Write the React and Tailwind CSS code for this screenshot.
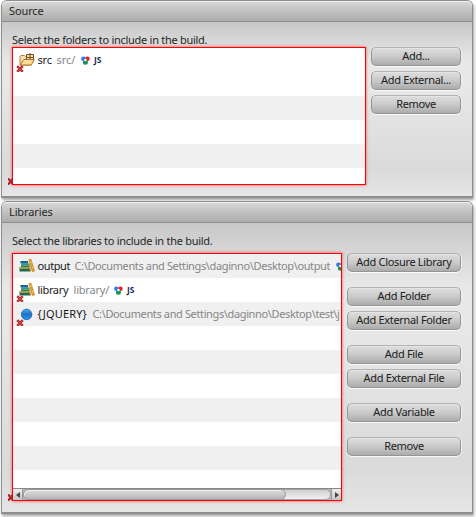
import React from 'react';

function Cross({ className }) {
  return (
    <svg className={className} width="8" height="8" viewBox="0 0 8 8">
      <path d="M1.2 1.2L6.8 6.8M6.8 1.2L1.2 6.8" stroke="#b02a30" strokeWidth="2.5" />
      <path d="M1.5 1.5L6.5 6.5M6.5 1.5L1.5 6.5" stroke="#dc5050" strokeWidth=".8" />
    </svg>
  );
}

function CornerCross() {
  return (
    <svg className="absolute -bottom-px -left-[5px]" width="5" height="7" viewBox="0 0 5 7">
      <path d="M0 .5L5 6M5 .8L0 6.5" stroke="#a5141b" strokeWidth="2.1" />
      <path d="M.5 1L5 5.5M4.5 1.5L.5 5.5" stroke="#d8413f" strokeWidth=".6" />
    </svg>
  );
}

function FolderIcon() {
  return (
    <svg width="16" height="16" viewBox="0 0 16 16">
      <path d="M1 13V4.5L2 3.5H5.5L6.5 4.5H12V13Z" fill="#f8e3ae" stroke="#b07c38" />
      <path d="M7.5 2.5H14.5V8.5H7.5ZM11 1V8M7 5.5H15" fill="#f8dfa5" stroke="#764a22" />
      <path d="M1.2 13L4.8 7.5H15.3L12.3 13Z" fill="#fbdc94" stroke="#a8702a" />
    </svg>
  );
}

function BooksIcon() {
  return (
    <svg width="16" height="16" viewBox="0 0 16 16">
      <path d="M1.5 3H9V5.5H1.5Z" fill="#17629c" />
      <path d="M2.5 5.5H10.5V9H2Z" fill="#16865a" />
      <path d="M3.5 6.7H10V7.5H3.5Z" fill="#8bd4ac" />
      <path d="M.5 9H10.5V11H.5Z" fill="#a36a35" />
      <path d="M1 9.6H9.5V10.3H1Z" fill="#ead0a0" />
      <path d="M.5 11H11V13.5H.5Z" fill="#16704f" />
      <path d="M9.8 1.8L12 1.3L15.5 12.9L13.4 13.5Z" fill="#eba51d" stroke="#b36e15" strokeWidth=".6" />
      <path d="M10.8 6L12.2 13.4H10.6Z" fill="#d28b17" />
      <path d="M11 4.4L12.4 4M12.9 9.8L14.1 9.4" stroke="#ffe18b" />
    </svg>
  );
}

function BallIcon() {
  return (
    <svg width="16" height="16" viewBox="0 0 16 16">
      <defs>
        <linearGradient id="ball" x1="0" y1="0" x2="0" y2="1">
          <stop offset="0" stopColor="#4ba6e9" />
          <stop offset=".5" stopColor="#1b74c6" />
          <stop offset="1" stopColor="#2f98ed" />
        </linearGradient>
      </defs>
      <circle cx="7.6" cy="8.4" r="5.3" fill="url(#ball)" stroke="#205c98" strokeWidth=".7" />
    </svg>
  );
}

function ClosureIcon() {
  return (
    <svg className="shrink-0" width="9" height="9" viewBox="0 0 9 9">
      <circle cx="2.4" cy="2.7" r="2.3" fill="#2f78f0" />
      <circle cx="6.4" cy="2.7" r="2.3" fill="#e5201f" />
      <circle cx="4.4" cy="6.2" r="2.5" fill="#119551" />
      <circle cx="4.4" cy="4" r="1.3" fill="#fff" />
    </svg>
  );
}

function Row({ icon, name, path, nameClass, pathClass, error, badges, shade }) {
  return (
    <div className={`relative flex h-6 shrink-0 items-center whitespace-nowrap pl-[6px] ${shade ? 'bg-[#f0f0f0]' : 'bg-white'}`}>
      {icon && (
        <>
          <span className="w-4 shrink-0">{icon}</span>
          <span className={`ml-[2.5px] shrink-0 text-[#181818] ${nameClass}`}>{name}</span>
          <span className={`shrink-0 text-[#868686] ${pathClass}`}>{path}</span>
          {badges && (
            <span className="flex shrink-0 items-center">
              <ClosureIcon />
              <b className="ml-[4px] font-['Noto_Sans'] text-[8.5px] leading-none tracking-[-0.1px] text-[#182a5c]">JS</b>
            </span>
          )}
          {error && <Cross className="absolute left-[3px] top-[17px]" />}
        </>
      )}
    </div>
  );
}

function Button({ children, className = '' }) {
  return (
    <button className={`flex h-[19px] w-full items-center justify-center whitespace-nowrap rounded-[5px] border border-[#959595] border-t-[#b2b2b2] bg-linear-to-b from-[#dedede] via-[#cacaca] to-[#acacac] tracking-[-0.32px] text-[#202020] shadow-[inset_0_1px_0_#e4e4e4,0_1px_0_#fafafa,1px_0_0_#f0f0f0] ${className}`}>
      <span className="-mt-px">{children}</span>
    </button>
  );
}

function Panel({ title, className, children }) {
  return (
    <section className={`ml-px w-[472px] rounded-t-[6px] border border-b-2 border-[#8e8e8e] bg-[#e4e4e4] shadow-[1px_2px_3px_#a0a0a0] ${className}`}>
      <header className="flex h-[21px] items-center rounded-t-[5px] border-b border-[#8e8e8e] bg-linear-to-b from-[#d8d8d8] to-[#acacac] pl-[7px] shadow-[inset_0_1px_0_#f0f0f0]">
        <span className="tracking-[-0.12px]">{title}</span>
      </header>
      {children}
    </section>
  );
}

const listClass = 'relative border border-[#f00] bg-white shadow-[0_0_3px_#ff5050]';

export default function App() {
  return (
    <main className="h-[517px] w-[476px] overflow-hidden bg-white font-['Noto_Sans',sans-serif] text-[11px] leading-[14px] text-[#272727]">
      <Panel title="Source" className="h-[198px]">
        <div className="h-[174px] bg-[linear-gradient(#c8c8c8,#e8e8e8_22%,#e8e8e8_35%,#dadada_85%,#e6e6e6)]">
          <div className="h-[25px] pl-[10px] pt-[11px]"><span className="tracking-[-0.28px]">Select the folders to include in the build.</span></div>
          <div className="flex items-start gap-[5px] pl-[10px]">
            <div className={`h-[138px] w-[354px] ${listClass}`}>
              <div className="flex h-full flex-col overflow-hidden">
                <Row icon={<FolderIcon />} name="src" path="src/" nameClass="w-[19px] tracking-[-0.2px]" pathClass="w-[24.5px]" error badges />
                <Row />
                <Row shade />
                <Row />
                <Row shade />
              </div>
              <CornerCross />
            </div>
            <div className="flex w-[90px] flex-col gap-[5px]">
              <Button>Add...</Button>
              <Button>Add External...</Button>
              <Button>Remove</Button>
            </div>
          </div>
        </div>
      </Panel>
      <Panel title="Libraries" className="mt-[3px] h-[313px]">
        <div className="h-[289px] bg-[linear-gradient(#c8c8c8,#e8e8e8_22%,#e8e8e8_35%,#dadada_85%,#e6e6e6)]">
          <div className="h-[30px] pl-[10px] pt-[11px]"><span className="tracking-[-0.28px]">Select the libraries to include in the build.</span></div>
          <div className="flex items-start gap-[5px] pl-[10px]">
            <div className={`h-[248px] w-[330px] ${listClass}`}>
              <div className="flex h-[234px] flex-col overflow-hidden">
                <Row icon={<BooksIcon />} name="output" path="C:\Documents and Settings\daginno\Desktop\output" nameClass="w-[37px] tracking-[-0.4px]" pathClass="w-[261px] tracking-[-0.37px]" badges shade />
                <Row icon={<BooksIcon />} name="library" path="library/" nameClass="w-[36px] tracking-[-0.35px]" pathClass="w-[40.5px] tracking-[-0.2px]" error badges />
                <Row icon={<BallIcon />} name="{JQUERY}" path="C:\Documents and Settings\daginno\Desktop\test\j" nameClass="w-[55px] tracking-[0.15px]" pathClass="tracking-[-0.37px]" error shade />
                <Row />
                <Row shade />
                <Row />
                <Row shade />
                <Row />
                <Row shade />
                <Row />
              </div>
              <div className="flex h-3 border-t border-[#888] bg-[#b8b8b8]">
                <div className="flex w-[10px] items-center justify-center border-r border-[#999] bg-linear-to-b from-[#eee] to-[#c4c4c4]">
                  <svg width="4" height="6" viewBox="0 0 4 6"><path d="M4 0V6L0 3Z" fill="#444" /></svg>
                </div>
                <div className="flex-1 rounded-full border border-[#a3a3a3] bg-linear-to-b from-[#d0d0d0] to-[#f0f0f0]">
                  <div className="-ml-px -mt-px h-[11px] w-[263px] rounded-full border border-[#989898] bg-linear-to-b from-[#dedede] to-[#b5b5b5] shadow-[inset_1px_1px_0_#eee]" />
                </div>
                <div className="flex w-[10px] items-center justify-center border-l border-[#999] bg-linear-to-b from-[#eee] to-[#c4c4c4]">
                  <svg width="4" height="6" viewBox="0 0 4 6"><path d="M0 0V6L4 3Z" fill="#444" /></svg>
                </div>
              </div>
              <CornerCross />
            </div>
            <div className="flex w-[114px] flex-col gap-[5px]">
              <Button>Add Closure Library</Button>
              <Button className="mt-[10px]">Add Folder</Button>
              <Button>Add External Folder</Button>
              <Button className="mt-[10px]">Add File</Button>
              <Button>Add External File</Button>
              <Button className="mt-[10px]">Add Variable</Button>
              <Button className="mt-[10px]">Remove</Button>
            </div>
          </div>
        </div>
      </Panel>
    </main>
  );
}
